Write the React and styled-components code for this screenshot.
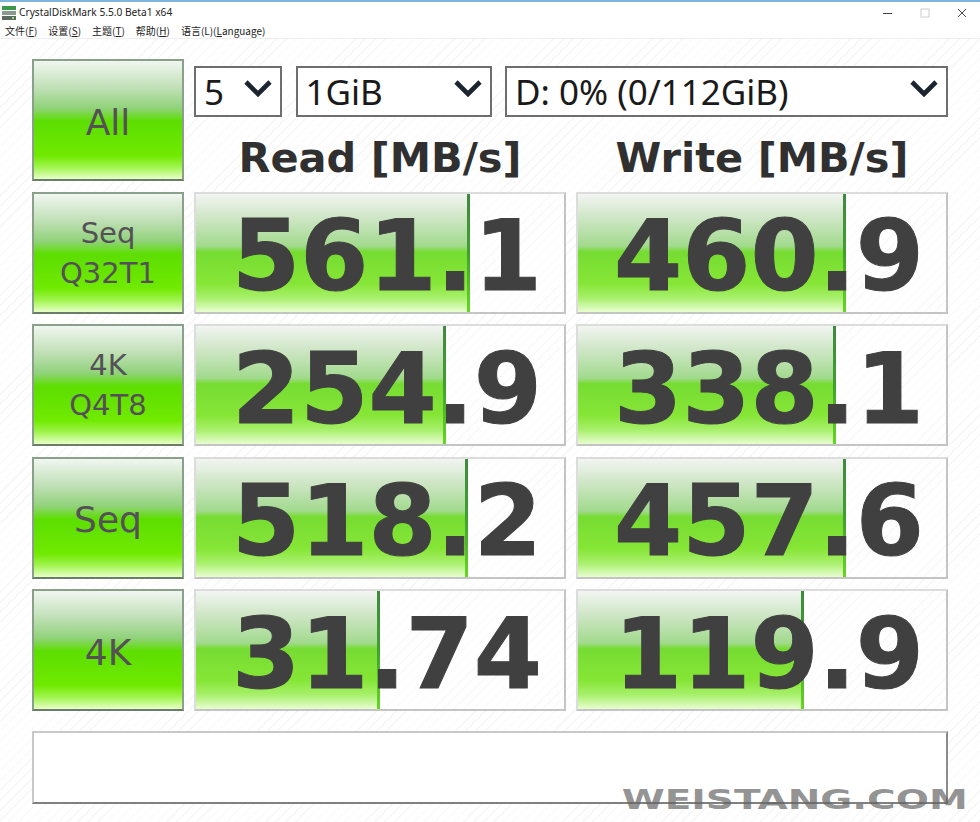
import React from "react";
import styled, { createGlobalStyle } from "styled-components";

const GlobalStyle = createGlobalStyle`
  html, body { margin: 0; padding: 0; background: #fff; }
  body { width: 980px; height: 822px; overflow: hidden; font-family: "Liberation Sans", sans-serif; }
`;

const rows = [
  { label: ["Seq", "Q32T1"], read: { value: "561.1", fill: 271 }, write: { value: "460.9", fill: 265 } },
  { label: ["4K", "Q4T8"], read: { value: "254.9", fill: 247 }, write: { value: "338.1", fill: 255 } },
  { label: ["Seq"], read: { value: "518.2", fill: 269 }, write: { value: "457.6", fill: 265 } },
  { label: ["4K"], read: { value: "31.74", fill: 181 }, write: { value: "119.9", fill: 223 } },
];

export default function App() {
  return (
    <Window>
      <GlobalStyle />
      <TopEdge />
      <TitleBar>
        <AppIcon width="14" height="14" viewBox="0 0 14 14">
          <rect x="0" y="0" width="14" height="4" fill="#3a9a4a" />
          <rect x="0" y="5" width="14" height="4" fill="#8a9a90" />
          <rect x="0" y="10" width="14" height="4" fill="#5a6a60" />
          <rect x="10" y="11" width="2" height="2" fill="#8fe060" />
        </AppIcon>
        <Title>CrystalDiskMark 5.5.0 Beta1 x64</Title>
        <WindowControls>
          <svg width="10" height="10" viewBox="0 0 10 10">
            <path d="M0 5.5H9" stroke="#444" strokeWidth="1" />
          </svg>
          <svg width="10" height="10" viewBox="0 0 10 10">
            <rect x="1" y="1" width="8" height="8" fill="none" stroke="#ccc" />
          </svg>
          <svg width="10" height="10" viewBox="0 0 10 10">
            <path d="M1 1L9 9M9 1L1 9" stroke="#444" strokeWidth="1" />
          </svg>
        </WindowControls>
      </TitleBar>
      <MenuBar>
        <MenuItem>文件(<u>F</u>)</MenuItem>
        <MenuItem>设置(<u>S</u>)</MenuItem>
        <MenuItem>主题(<u>T</u>)</MenuItem>
        <MenuItem>帮助(<u>H</u>)</MenuItem>
        <MenuItem>语言(L)(<u>L</u>anguage)</MenuItem>
      </MenuBar>
      <Content>
        <Board>
          <TestButton>All</TestButton>
          <HeadArea>
            <Selects>
              <Select $width={88}>5<Chevron /></Select>
              <Select $width={196}>1GiB<Chevron /></Select>
              <Select $width={443}>D: 0% (0/112GiB)<Chevron /></Select>
            </Selects>
            <Headers>
              <Header>Read [MB/s]</Header>
              <Header>Write [MB/s]</Header>
            </Headers>
          </HeadArea>
          {rows.map((row, i) => (
            <React.Fragment key={i}>
              <TestButton $small={row.label.length > 1}>
                {row.label.map((line) => (
                  <span key={line}>{line}</span>
                ))}
              </TestButton>
              <Meter data={row.read} />
              <Meter data={row.write} />
            </React.Fragment>
          ))}
        </Board>
        <MessageBox />
        <Watermark>WEISTANG.COM</Watermark>
      </Content>
    </Window>
  );
}

function Chevron() {
  return (
    <ChevronIcon width="28" height="20" viewBox="0 0 28 20">
      <path d="M2 3L14 15L26 3" fill="none" stroke="#1c2430" strokeWidth="4.6" />
    </ChevronIcon>
  );
}

function Meter({ data }) {
  return (
    <MeterBox>
      <MeterFill style={{ width: data.fill }} />
      <MeterValue>{data.value}</MeterValue>
    </MeterBox>
  );
}

const Window = styled.div`
  width: 980px;
  height: 822px;
  display: flex;
  flex-direction: column;
  background: #fff;
`;
const TopEdge = styled.div`
  height: 2px;
  background: #7fb4dc;
`;
const TitleBar = styled.div`
  height: 21px;
  display: flex;
  align-items: center;
  padding-left: 2px;
  gap: 3px;
`;
const AppIcon = styled.svg`
  flex: none;
`;
const Title = styled.div`
  font-family: "Noto Sans", sans-serif;
  font-size: 10.2px;
  color: #222;
  margin-top: -2px;
`;
const WindowControls = styled.div`
  margin-left: auto;
  display: flex;
  gap: 27px;
  padding-right: 13px;
  svg {
    display: block;
  }
`;
const MenuBar = styled.div`
  height: 15px;
  display: flex;
  align-items: center;
  gap: 11px;
  padding-left: 5px;
  border-bottom: 1px solid #eee;
`;
const MenuItem = styled.span`
  font-family: "Noto Sans CJK SC", "Noto Sans", sans-serif;
  font-size: 10px;
  color: #222;
`;
const Content = styled.div`
  position: relative;
  flex: 1;
  padding: 20px 32px 0;
  background: repeating-linear-gradient(135deg, #fff 0 6px, #f6f6f6 6px 7px);
`;
const Board = styled.div`
  display: grid;
  grid-template-columns: 152px 372px 372px;
  grid-auto-rows: 122px;
  column-gap: 10px;
  row-gap: 10.5px;
`;
const TestButton = styled.div`
  box-sizing: border-box;
  display: flex;
  flex-direction: column;
  align-items: center;
  justify-content: center;
  padding-top: ${(p) => (p.$small ? "0" : "5px")};
  border: 2px solid #8aa08a;
  border-bottom-color: #6b7d69;
  background: linear-gradient(
    180deg,
    #f0f6f0 0%,
    #c2e0b8 22%,
    #90d27a 40%,
    #5cde00 51%,
    #70ea00 80%,
    #a0f44e 90%,
    #e8ffc8 100%
  );
  font-family: "DejaVu Sans", sans-serif;
  font-size: ${(p) => (p.$small ? "29px" : "36px")};
  line-height: 40px;
  color: #555058;
`;
const HeadArea = styled.div`
  grid-column: 2 / 4;
  display: flex;
  flex-direction: column;
  padding-top: 7px;
`;
const Selects = styled.div`
  display: flex;
  gap: 13.5px;
`;
const Select = styled.div`
  box-sizing: border-box;
  flex: none;
  width: ${(p) => p.$width}px;
  height: 51px;
  display: flex;
  align-items: center;
  justify-content: space-between;
  padding: 0 8px 0 8px;
  background: #fff;
  border: 2px solid #6e6e6e;
  font-family: "Noto Sans", sans-serif;
  font-size: 35px;
  color: #1a1a1a;
`;
const ChevronIcon = styled.svg`
  flex: none;
  margin-bottom: 6px;
`;
const Headers = styled.div`
  display: grid;
  grid-template-columns: 372px 372px;
  column-gap: 10px;
  margin-top: 17px;
`;
const Header = styled.div`
  text-align: center;
  font-family: "DejaVu Sans", sans-serif;
  font-weight: 700;
  font-size: 41.5px;
  line-height: 48px;
  color: #303030;
`;
const MeterBox = styled.div`
  position: relative;
  box-sizing: border-box;
  overflow: hidden;
  border: 2px solid #c4c4c4;
  border-top-color: #dcdcdc;
  border-left-color: #dcdcdc;
  display: flex;
  align-items: center;
  justify-content: flex-end;
  padding: 7px 22px 0 0;
  background: repeating-linear-gradient(135deg, #fff 0 6px, #f9f9f9 6px 7px);
`;
const MeterFill = styled.div`
  position: absolute;
  left: 0;
  top: 0;
  bottom: 0;
  border-right: 3px solid;
  border-image: linear-gradient(180deg, #3e8a3e, #3fa030 50%, #66d820 100%) 1;
  background: linear-gradient(
    180deg,
    #f2f5f2 0%,
    #cfe6c6 20%,
    #a2da8e 44%,
    #76dc32 49%,
    #86e636 76%,
    #a8f06c 88%,
    #e8fdd0 100%
  );
`;
const MeterValue = styled.span`
  position: relative;
  font-family: "DejaVu Sans", sans-serif;
  font-weight: 700;
  font-size: 98px;
  line-height: 1;
  color: #404040;
  -webkit-text-stroke: 1px #404040;
`;
const MessageBox = styled.div`
  box-sizing: border-box;
  width: 916px;
  height: 73px;
  margin-top: 20px;
  background: #fff;
  border: 2px solid #c8c8c8;
  border-right-color: #8c8c8c;
  border-bottom-color: #808080;
`;
const Watermark = styled.div`
  position: absolute;
  right: 12px;
  top: 748px;
  font-family: "DejaVu Sans", sans-serif;
  font-weight: 700;
  font-size: 26px;
  line-height: 1;
  color: rgba(100, 100, 100, 0.7);
  transform: scaleX(1.5);
  transform-origin: right center;
`;
